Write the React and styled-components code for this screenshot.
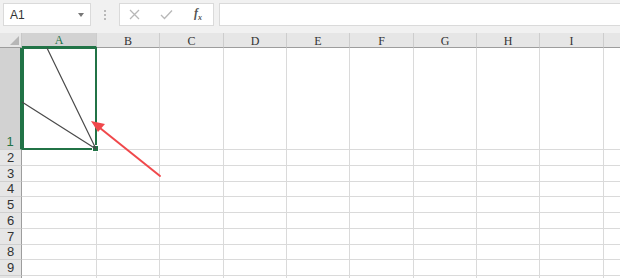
import React from "react";
import styled, { createGlobalStyle } from "styled-components";

const Global = createGlobalStyle`
  html, body { margin: 0; padding: 0; background: #fff; }
  body { font-family: "Liberation Sans", Arial, sans-serif; overflow: hidden; }
`;

const Page = styled.div`
  width: 620px;
  height: 278px;
  overflow: hidden;
  position: relative;
  background: #fff;
`;

const Toolbar = styled.div`
  display: flex;
  height: 33px;
  padding: 3px 0 0 3px;
  box-sizing: border-box;
  align-items: flex-start;
  background: #f1f1f1;
`;

const NameBox = styled.div`
  display: flex;
  align-items: center;
  justify-content: space-between;
  width: 88px;
  height: 23px;
  box-sizing: border-box;
  padding: 0 6px 0 6px;
  background: #fff;
  border: 1px solid #dadada;
  font-size: 12px;
  color: #333;
`;

const Caret = styled.span`
  width: 0;
  height: 0;
  border-left: 3.5px solid transparent;
  border-right: 3.5px solid transparent;
  border-top: 4px solid #777;
`;

const Grip = styled.div`
  width: 28px;
  height: 23px;
  display: flex;
  flex-direction: column;
  align-items: center;
  justify-content: center;
  gap: 2px;
  span {
    width: 2px;
    height: 2px;
    background: #b9b9b9;
  }
`;

const ButtonBox = styled.div`
  display: flex;
  align-items: center;
  width: 95px;
  height: 23px;
  box-sizing: border-box;
  background: #fff;
  border: 1px solid #dadada;
  padding-left: 9px;
  gap: 14px;
  color: #b8b8b8;
`;

const Fx = styled.span`
  font-family: "Liberation Serif", serif;
  font-style: italic;
  font-weight: bold;
  font-size: 12px;
  color: #555;
  margin-left: 7px;
`;

const FormulaBar = styled.div`
  flex: 1;
  height: 23px;
  margin-left: 5px;
  box-sizing: border-box;
  background: #fff;
  border: 1px solid #dadada;
  border-right: none;
`;

const Sheet = styled.div`
  display: grid;
  grid-template-columns: 22px 75px 63px 64px 63px 63px 64px 63px 63px 64px 64px;
  grid-template-rows: 15px 102px repeat(8, 15.75px) 16px;
  position: relative;
`;

const Corner = styled.div`
  background: #e6e6e6;
  border-right: 1px solid #c8c8c8;
  border-bottom: 1px solid #9d9d9d;
  position: relative;
  &::after {
    content: "";
    position: absolute;
    right: 2px;
    bottom: 2px;
    width: 0;
    height: 0;
    border-left: 9px solid transparent;
    border-bottom: 9px solid #b6b6b6;
  }
`;

const ColHead = styled.div`
  display: flex;
  align-items: center;
  justify-content: center;
  box-sizing: border-box;
  background: ${(p) => (p.$active ? "#d2d2d2" : "#e6e6e6")};
  border-right: 1px solid #cdcdcd;
  border-bottom: ${(p) => (p.$active ? "2px solid #217346" : "1px solid #9d9d9d")};
  font-family: "Liberation Serif", "DejaVu Serif", serif;
  font-size: 12px;
  color: ${(p) => (p.$active ? "#217346" : "#333")};
  padding-top: 2px;
`;

const RowHead = styled.div`
  display: flex;
  align-items: flex-end;
  justify-content: center;
  box-sizing: border-box;
  background: ${(p) => (p.$active ? "#d2d2d2" : "#e6e6e6")};
  border-right: ${(p) => (p.$active ? "2px solid #217346" : "1px solid #9d9d9d")};
  border-bottom: 1px solid #cfcfcf;
  font-size: 13px;
  line-height: 15px;
  color: ${(p) => (p.$active ? "#217346" : "#333")};
`;

const Cell = styled.div`
  box-sizing: border-box;
  border-right: 1px solid #dadada;
  border-bottom: 1px solid #dadada;
  position: relative;
`;

const Selection = styled.div`
  position: absolute;
  left: 0;
  top: -1px;
  right: -1px;
  bottom: -1px;
  border: 2px solid #217346;
  z-index: 2;
`;

const Handle = styled.div`
  position: absolute;
  right: -4px;
  bottom: -4px;
  width: 5px;
  height: 5px;
  background: #217346;
  border: 1px solid #fff;
`;

const Overlay = styled.svg`
  position: absolute;
  left: 0;
  top: 0;
  pointer-events: none;
  z-index: 3;
`;

const cols = ["A", "B", "C", "D", "E", "F", "G", "H", "I", "J"];
const rows = [1, 2, 3, 4, 5, 6, 7, 8, 9, 10];

export default function App() {
  return (
    <Page>
      <Global />
      <Toolbar>
        <NameBox>
          A1
          <Caret />
        </NameBox>
        <Grip>
          <span />
          <span />
          <span />
        </Grip>
        <ButtonBox>
          <svg width="11" height="11" viewBox="0 0 11 11">
            <path d="M1 1L10 10M10 1L1 10" stroke="#b8b8b8" strokeWidth="1.3" fill="none" />
          </svg>
          <svg width="13" height="11" viewBox="0 0 13 11" style={{ marginLeft: 6 }}>
            <path d="M1 6L4.5 9.5L12 1.5" stroke="#b8b8b8" strokeWidth="1.3" fill="none" />
          </svg>
          <Fx>
            f<sub style={{ fontSize: 8 }}>x</sub>
          </Fx>
        </ButtonBox>
        <FormulaBar />
      </Toolbar>
      <Sheet>
        <Corner />
        {cols.map((c) => (
          <ColHead key={c} $active={c === "A"}>
            {c}
          </ColHead>
        ))}
        {rows.map((r) => (
          <React.Fragment key={r}>
            <RowHead $active={r === 1}>{r}</RowHead>
            {cols.map((c) => (
              <Cell key={c}>
                {r === 1 && c === "A" && (
                  <Selection>
                    <Handle />
                  </Selection>
                )}
              </Cell>
            ))}
          </React.Fragment>
        ))}
        <Overlay width="620" height="245" viewBox="0 33 620 245">
          <path d="M96 149L47 48M96 149L22 102" stroke="#4a4a4a" strokeWidth="1.2" fill="none" />
          <path d="M160 176L100 128" stroke="#f0484b" strokeWidth="2" fill="none" strokeLinecap="round" />
          <path d="M91 121L105 124L98 132Z" fill="#f0484b" />
        </Overlay>
      </Sheet>
    </Page>
  );
}
